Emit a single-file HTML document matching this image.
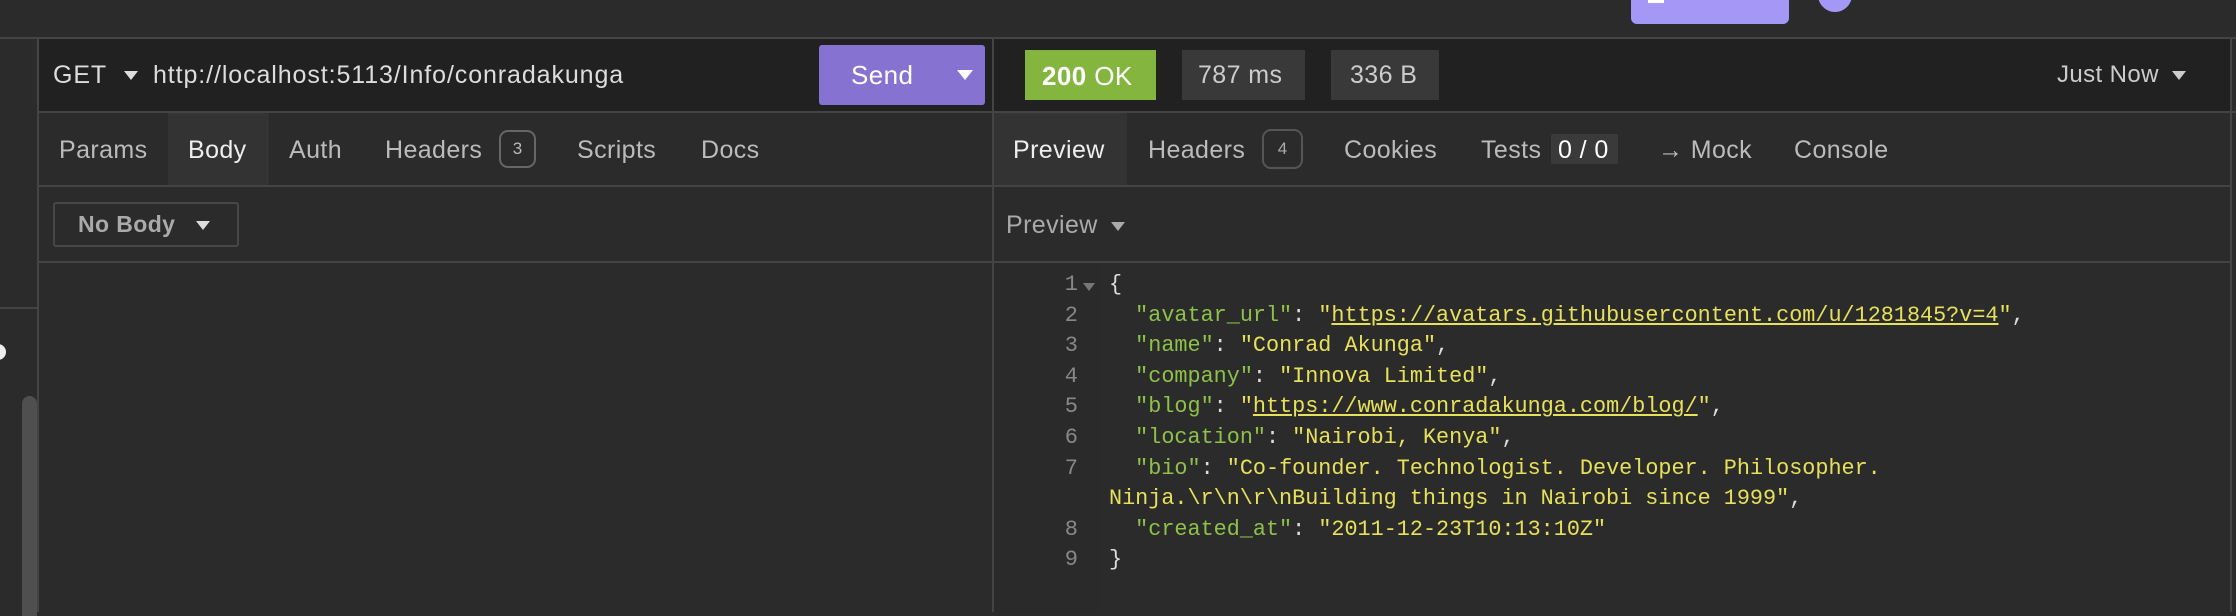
<!DOCTYPE html>
<html><head><meta charset="utf-8"><style>
*{box-sizing:border-box;margin:0;padding:0}
body{width:2236px;height:612px;overflow:hidden;background:#2b2b2b;font-family:"Liberation Sans",sans-serif;color:#ddd;position:relative}
.a{position:absolute}
.t{position:absolute;font-size:25px;letter-spacing:0.4px;color:#bbb;white-space:nowrap;line-height:1}
.tri{display:inline-block;width:0;height:0;border-left:7px solid transparent;border-right:7px solid transparent;border-top:9px solid currentColor;vertical-align:middle}
.code{position:absolute;left:1109px;top:270px;font-family:"Liberation Mono",monospace;font-size:21.8px;line-height:30.6px;color:#e6e05a;white-space:pre}
.k{color:#8dc14a}.p{color:#ddd}.u{text-decoration:underline}
.ln{position:absolute;left:1050px;top:270px;width:28px;text-align:right;font-family:"Liberation Mono",monospace;font-size:22px;line-height:30.6px;color:#888;white-space:pre}
</style></head><body>
<div class="a" style="left:0;top:0;width:2236px;height:37px;background:#2b2b2b"></div>
<div class="a" style="left:1631px;top:-10px;width:158px;height:34px;background:#a597f5;border-radius:6px"></div>
<div class="a" style="left:1648px;top:0;width:16px;height:3px;background:#fff"></div>
<div class="a" style="left:1818px;top:-22px;width:34px;height:34px;background:#a597f5;border-radius:50%"></div>
<div class="a" style="left:0;top:37px;width:2236px;height:2px;background:#444"></div>
<div class="a" style="left:37px;top:39px;width:2px;height:573px;background:#444"></div>
<div class="a" style="left:0;top:307px;width:37px;height:2px;background:#444"></div>
<div class="a" style="left:-10px;top:344px;width:16px;height:16px;background:#eee;border-radius:50%"></div>
<div class="a" style="left:22px;top:396px;width:15px;height:220px;background:#4f4f4f;border-radius:8px 8px 0 0"></div>
<div class="a" style="left:39px;top:39px;width:953px;height:72px;background:#212121"></div>
<div class="t" style="left:53px;top:63px;color:#ddd;letter-spacing:0.9px">GET</div>
<div class="a" style="left:124px;top:71px;width:0;height:0;border-left:7px solid transparent;border-right:7px solid transparent;border-top:9px solid #ddd"></div>
<div class="t" style="left:153px;top:63px;color:#ddd;letter-spacing:0.9px">http://localhost:5113/Info/conradakunga</div>
<div class="a" style="left:819px;top:45px;width:166px;height:60px;background:#8673d1;border-radius:3px"></div>
<div class="t" style="left:851px;top:62px;color:#fff;font-size:26px">Send</div>
<div class="a" style="left:957px;top:70px;width:0;height:0;border-left:8px solid transparent;border-right:8px solid transparent;border-top:10px solid #fff"></div>
<div class="a" style="left:39px;top:111px;width:2197px;height:2px;background:#444"></div>
<div class="a" style="left:168px;top:113px;width:101px;height:73px;background:#333"></div>
<div class="t" style="left:59px;top:138px">Params</div>
<div class="t" style="left:188px;top:138px;color:#eee">Body</div>
<div class="t" style="left:289px;top:138px">Auth</div>
<div class="t" style="left:385px;top:138px">Headers</div>
<div class="a" style="left:499px;top:130px;width:37px;height:38px;border:2px solid #666;border-radius:9px;color:#bbb;font-size:17px;text-align:center;line-height:34px">3</div>
<div class="t" style="left:577px;top:138px">Scripts</div>
<div class="t" style="left:701px;top:138px">Docs</div>
<div class="a" style="left:39px;top:185px;width:953px;height:2px;background:#444"></div>
<div class="a" style="left:53px;top:202px;width:186px;height:45px;border:2px solid #474747;border-radius:3px"></div>
<div class="t" style="left:78px;top:213px;font-size:23px;font-weight:bold;color:#aaa">No Body <span class="tri" style="margin-left:14px;color:#ddd"></span></div>
<div class="a" style="left:39px;top:261px;width:953px;height:2px;background:#444"></div>
<div class="a" style="left:992px;top:39px;width:2px;height:573px;background:#444"></div>
<div class="a" style="left:994px;top:39px;width:1236px;height:72px;background:#212121"></div>
<div class="a" style="left:1025px;top:50px;width:131px;height:50px;background:#84b53e"></div>
<div class="t" style="left:1042px;top:63px;color:#fff;font-size:26px"><b>200</b> OK</div>
<div class="a" style="left:1182px;top:50px;width:123px;height:50px;background:#393939"></div>
<div class="t" style="left:1198px;top:63px;color:#ccc">787 ms</div>
<div class="a" style="left:1331px;top:50px;width:108px;height:50px;background:#393939"></div>
<div class="t" style="left:1350px;top:63px;color:#ccc">336 B</div>
<div class="t" style="left:2057px;top:63px;color:#ccc;font-size:24px">Just Now <span class="tri" style="margin-left:6px"></span></div>
<div class="a" style="left:2230px;top:39px;width:2px;height:573px;background:#444"></div>
<div class="a" style="left:994px;top:113px;width:133px;height:73px;background:#333"></div>
<div class="t" style="left:1013px;top:138px;color:#eee">Preview</div>
<div class="t" style="left:1148px;top:138px">Headers</div>
<div class="a" style="left:1262px;top:129px;width:41px;height:40px;border:2px solid #555;border-radius:9px;color:#aaa;font-size:17px;text-align:center;line-height:36px">4</div>
<div class="t" style="left:1344px;top:138px">Cookies</div>
<div class="t" style="left:1481px;top:138px">Tests</div>
<div class="a" style="left:1551px;top:134px;width:67px;height:30px;background:#3a3a3a;border-radius:2px"></div>
<div class="t" style="left:1558px;top:138px;color:#fff">0 / 0</div>
<div class="t" style="left:1658px;top:138px">→ Mock</div>
<div class="t" style="left:1794px;top:138px">Console</div>
<div class="a" style="left:994px;top:185px;width:1236px;height:2px;background:#444"></div>
<div class="t" style="left:1006px;top:213px;color:#aaa">Preview <span class="tri" style="margin-left:6px"></span></div>
<div class="a" style="left:994px;top:261px;width:1236px;height:2px;background:#444"></div>
<div class="a" style="left:994px;top:263px;width:105px;height:349px;background:#2a2a2a"></div>
<div class="ln">1
2
3
4
5
6
7

8
9</div>
<div class="a" style="left:1083px;top:283px;width:0;height:0;border-left:6px solid transparent;border-right:6px solid transparent;border-top:8px solid #777"></div>
<div class="code"><span class="p">{</span>
  <span class="k">"avatar_url"</span><span class="p">: </span>"<span class="u">https://avatars.githubusercontent.com/u/1281845?v=4</span>"<span class="p">,</span>
  <span class="k">"name"</span><span class="p">: </span>"Conrad Akunga"<span class="p">,</span>
  <span class="k">"company"</span><span class="p">: </span>"Innova Limited"<span class="p">,</span>
  <span class="k">"blog"</span><span class="p">: </span>"<span class="u">https://www.conradakunga.com/blog/</span>"<span class="p">,</span>
  <span class="k">"location"</span><span class="p">: </span>"Nairobi, Kenya"<span class="p">,</span>
  <span class="k">"bio"</span><span class="p">: </span>"Co-founder. Technologist. Developer. Philosopher.
Ninja.\r\n\r\nBuilding things in Nairobi since 1999"<span class="p">,</span>
  <span class="k">"created_at"</span><span class="p">: </span>"2011-12-23T10:13:10Z"
<span class="p">}</span></div>
</body></html>
